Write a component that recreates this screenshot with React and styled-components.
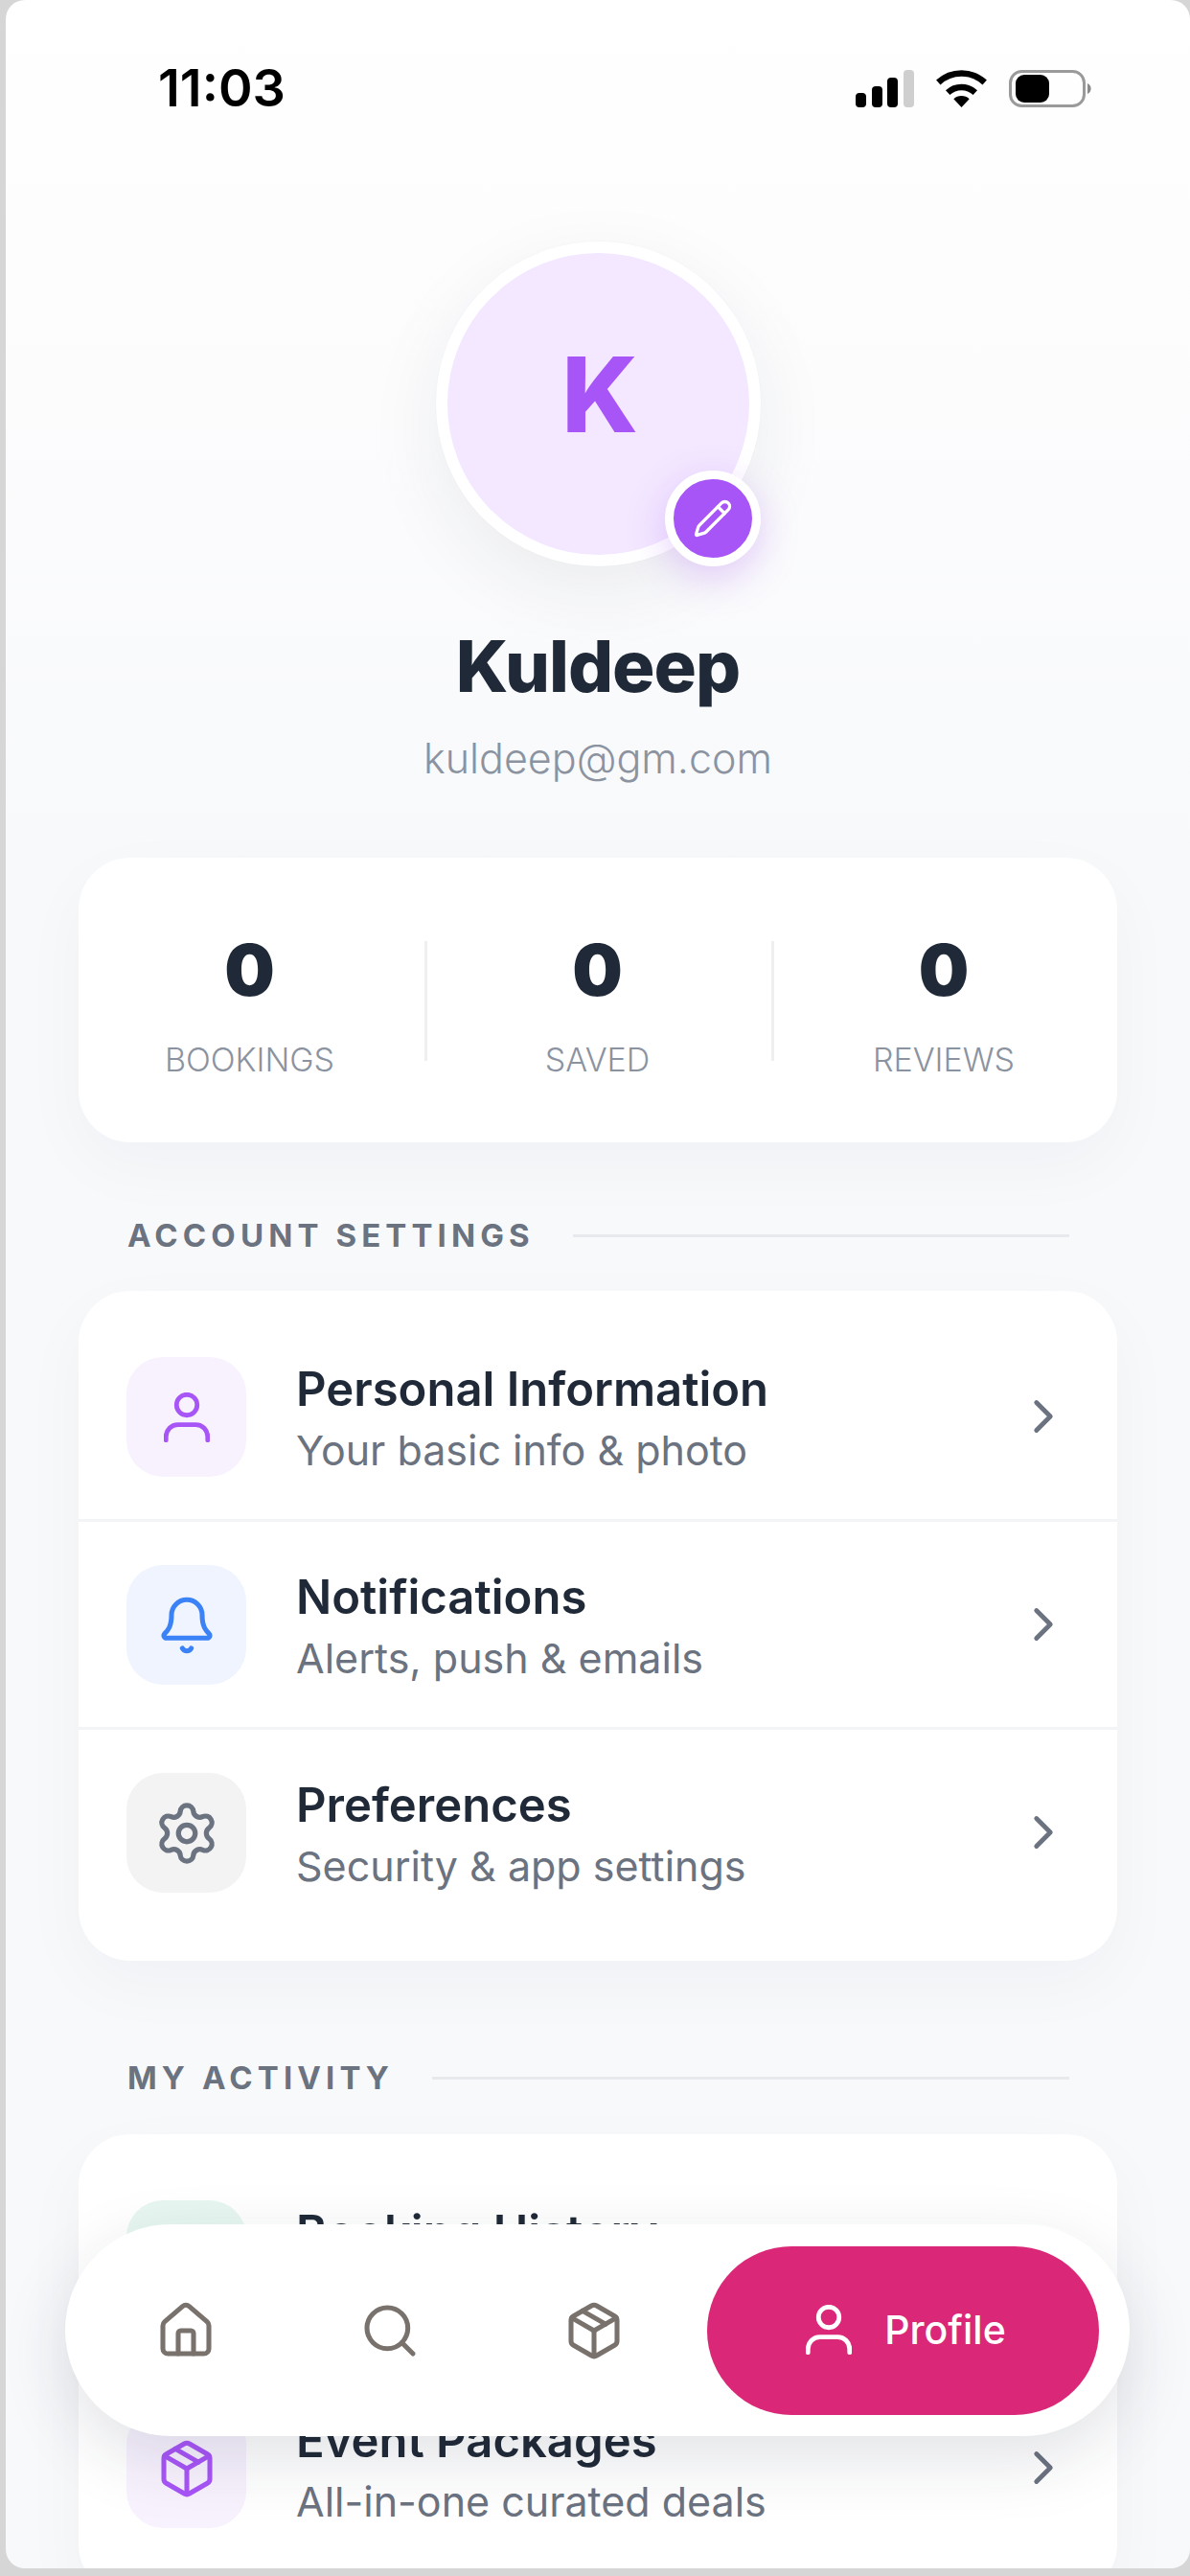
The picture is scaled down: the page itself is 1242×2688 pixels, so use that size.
import React from "react";
import styled, { createGlobalStyle } from "styled-components";
import { Bell, ChevronRight, House, Package, Pencil, Search, Settings, Calendar } from "lucide-react";

const Global = createGlobalStyle`
  html, body { margin: 0; padding: 0; background: #d6d6d6; }
  body { font-family: Inter, "Liberation Sans", sans-serif; }
  * { box-sizing: border-box; }
`;

const Page = styled.div`
  width: 1242px;
  height: 2688px;
  overflow: hidden;
  padding: 0 0 8px 6px;
`;

const Screen = styled.main`
  position: relative;
  width: 1236px;
  height: 2680px;
  overflow: hidden;
  border-radius: 20px;
  background: linear-gradient(180deg, #ffffff 0, #fdfdfe 250px, #f8f9fb 900px, #f8f9fb 100%);
`;

const StatusBar = styled.header`
  height: 52px;
  margin-top: 66px;
  padding: 0 102px 0 159px;
  display: flex;
  align-items: center;
  justify-content: space-between;
`;

const Time = styled.span`
  font-size: 54px;
  line-height: 52px;
  font-weight: 600;
  color: #000;
`;

const StatusIcons = styled.div`
  display: flex;
  align-items: center;
  gap: 23px;
`;

const Profile = styled.section`
  margin-top: 134px;
  display: flex;
  flex-direction: column;
  align-items: center;
`;

const Avatar = styled.div`
  position: relative;
  width: 339px;
  height: 339px;
  border-radius: 50%;
  border: 12px solid #fff;
  background: #f3e8ff;
  box-shadow: 0 24px 80px rgba(30, 41, 59, 0.07), 0 0 0 1px rgba(0, 0, 0, 0.012);
  display: flex;
  align-items: center;
  justify-content: center;
  font-size: 108px;
  font-weight: 800;
  color: #a855f7;
  line-height: 1;
  padding: 0 0 20px 4px;
`;

const EditBadge = styled.div`
  position: absolute;
  right: -12px;
  bottom: -12px;
  width: 100px;
  height: 100px;
  border-radius: 50%;
  border: 9px solid #fff;
  background: #a855f7;
  box-shadow: 0 12px 40px rgba(168, 85, 247, 0.28);
  color: #fff;
  display: flex;
  align-items: center;
  justify-content: center;
`;

const Name = styled.h1`
  margin: 64px 0 0;
  font-size: 74px;
  line-height: 80px;
  font-weight: 800;
  letter-spacing: -1px;
  color: #1f2937;
`;

const Email = styled.p`
  margin: 28px 0 0;
  font-size: 43px;
  line-height: 56px;
  font-weight: 300;
  color: #8b93a1;
`;

const Card = styled.div`
  margin: 0 76px;
  background: #fff;
  border-radius: 54px;
  box-shadow: 0 24px 70px rgba(30, 41, 59, 0.035);
`;

const StatsCard = styled(Card)`
  margin-top: 76px;
  height: 297px;
  padding-top: 72px;
  display: grid;
  grid-template-columns: 361px 3px 359px 3px 1fr;
  align-items: start;
`;

const Stat = styled.div`
  padding-right: 4px;
  display: flex;
  flex-direction: column;
  align-items: center;
`;

const StatValue = styled.strong`
  font-size: 74px;
  line-height: 90px;
  font-weight: 900;
  color: #1f2937;
`;

const StatLabel = styled.span`
  margin-top: 27px;
  font-size: 34px;
  line-height: 44px;
  font-weight: 300;
  color: #8b93a1;
`;

const StatDivider = styled.div`
  margin-top: 15px;
  height: 125px;
  background: #eeeff1;
`;

const SectionHead = styled.div`
  margin: ${(p) => p.$top}px 0 ${(p) => p.$bottom}px;
  padding: 0 126px 0 127px;
  display: flex;
  align-items: center;
  gap: 40px;
  font-size: 33px;
  line-height: 44px;
  font-weight: 700;
  letter-spacing: 5.1px;
  color: #6b7280;
  white-space: nowrap;
  &::after {
    content: "";
    flex: 1;
    height: 3px;
    background: #e8e9ec;
  }
`;

const ListCard = styled(Card)`
  padding: 24px 0;
`;

const Row = styled.div`
  height: 217px;
  padding: 45px 0 44px 50px;
  display: flex;
  align-items: flex-start;
  border-bottom: 3px solid ${(p) => (p.$last ? "transparent" : "#f3f4f6")};
`;

const IconBox = styled.div`
  width: 125px;
  height: 125px;
  flex: none;
  border-radius: 38px;
  background: ${(p) => p.$bg};
  color: ${(p) => p.$fg};
  display: flex;
  align-items: center;
  justify-content: center;
`;

const RowText = styled.div`
  margin: 3px 0 0 52px;
  flex: 1;
  display: flex;
  flex-direction: column;
`;

const RowTitle = styled.div`
  font-size: 49px;
  line-height: 62px;
  font-weight: 600;
  color: #1f2937;
`;

const RowSub = styled.div`
  margin-top: 1px;
  font-size: 43px;
  line-height: 62px;
  font-weight: 400;
  color: #6b7280;
`;

const Chevron = styled.div`
  width: 58px;
  margin: 33px 48px 0 0;
  color: #6b7280;
  display: flex;
`;

const Nav = styled.nav`
  position: absolute;
  left: 62px;
  bottom: 138px;
  width: 1111px;
  height: 221px;
  padding: 22px 31px 22px 19px;
  border-radius: 111px;
  background: #fff;
  box-shadow: 0 24px 70px rgba(30, 41, 59, 0.13);
  display: flex;
  align-items: center;
`;

const NavItem = styled.div`
  width: 213px;
  display: flex;
  justify-content: center;
  color: #78716c;
`;

const ActivePill = styled.div`
  margin-left: 12px;
  width: 409px;
  height: 176px;
  padding: 0 0 2px 6px;
  border-radius: 88px;
  background: #db2777;
  color: #fff;
  display: flex;
  align-items: center;
  justify-content: center;
  gap: 34px;
  font-size: 41px;
  font-weight: 500;
`;

const UserGlyph = ({ color = "currentColor" }) => (
  <svg width="48" height="52" viewBox="0 0 48 52" fill="none" stroke={color} strokeWidth="4.8" strokeLinecap="round">
    <circle cx="24" cy="13" r="10.75" />
    <path d="M2.25 49.75V46a12.4 12.4 0 0 1 12.4-12.4h18.7a12.4 12.4 0 0 1 12.4 12.4v3.75" />
  </svg>
);

const SignalIcon = () => (
  <svg width="61" height="39" viewBox="0 0 61 39">
    <rect x="0" y="24" width="11" height="15" rx="4" fill="#000" />
    <rect x="17" y="17" width="11" height="22" rx="4" fill="#000" />
    <rect x="33" y="8" width="11" height="31" rx="4" fill="#000" />
    <rect x="50" y="0" width="11" height="39" rx="4" fill="#cfcfcf" />
  </svg>
);

const WifiIcon = () => (
  <svg width="53" height="39" viewBox="0 0 53 39" fill="none">
    <path d="M2.3 13A35.5 35.5 0 0 1 50.7 13" stroke="#000" strokeWidth="6.5" />
    <path d="M12.2 23.6A21 21 0 0 1 40.8 23.6" stroke="#000" strokeWidth="6.5" />
    <path d="M26.5 39L18.3 30.2A12 12 0 0 1 34.7 30.2Z" fill="#000" />
  </svg>
);

const BatteryIcon = () => (
  <svg width="87" height="39" viewBox="0 0 87 39" fill="none">
    <rect x="1.5" y="1.5" width="77" height="36" rx="12" stroke="#9a9a9a" strokeWidth="3" />
    <rect x="7" y="5" width="35" height="29" rx="9" fill="#000" />
    <path d="M82 14a6 6 0 0 1 0 11Z" fill="#8a8a8a" />
  </svg>
);

const settings = [
  { title: "Personal Information", sub: "Your basic info & photo", bg: "#f8f2fe", fg: "#a855f7", icon: <UserGlyph /> },
  { title: "Notifications", sub: "Alerts, push & emails", bg: "#eff4fe", fg: "#3b82f6", icon: <Bell size={64} strokeWidth={1.9} /> },
  { title: "Preferences", sub: "Security & app settings", bg: "#f3f3f3", fg: "#6b7280", icon: <Settings size={70} strokeWidth={1.8} /> },
];

const activity = [
  { title: "Booking History", sub: "Past & upcoming events", bg: "#e7f6f0", fg: "#10b981", icon: <Calendar size={64} strokeWidth={1.9} /> },
  { title: "Event Packages", sub: "All-in-one curated deals", bg: "#f8f2fe", fg: "#a855f7", icon: <Package size={64} strokeWidth={1.9} /> },
];

const ListRow = ({ item, last }) => (
  <Row $last={last}>
    <IconBox $bg={item.bg} $fg={item.fg}>{item.icon}</IconBox>
    <RowText>
      <RowTitle>{item.title}</RowTitle>
      <RowSub>{item.sub}</RowSub>
    </RowText>
    <Chevron><ChevronRight size={58} strokeWidth={2} /></Chevron>
  </Row>
);

export default function App() {
  return (
    <Page>
      <Global />
      <Screen>
        <StatusBar>
          <Time>11:03</Time>
          <StatusIcons>
            <SignalIcon />
            <WifiIcon />
            <BatteryIcon />
          </StatusIcons>
        </StatusBar>

        <Profile>
          <Avatar>
            K
            <EditBadge><Pencil size={42} strokeWidth={1.9} /></EditBadge>
          </Avatar>
          <Name>Kuldeep</Name>
          <Email>kuldeep@gm.com</Email>
        </Profile>

        <StatsCard>
          <Stat><StatValue>0</StatValue><StatLabel>BOOKINGS</StatLabel></Stat>
          <StatDivider />
          <Stat><StatValue>0</StatValue><StatLabel>SAVED</StatLabel></Stat>
          <StatDivider />
          <Stat><StatValue>0</StatValue><StatLabel>REVIEWS</StatLabel></Stat>
        </StatsCard>

        <SectionHead $top={75} $bottom={36}>ACCOUNT SETTINGS</SectionHead>
        <ListCard>
          {settings.map((item, i) => (
            <ListRow key={item.title} item={item} last={i === settings.length - 1} />
          ))}
        </ListCard>

        <SectionHead $top={100} $bottom={37}>MY ACTIVITY</SectionHead>
        <ListCard>
          {activity.map((item) => (
            <ListRow key={item.title} item={item} />
          ))}
        </ListCard>

        <Nav>
          <NavItem><House size={64} strokeWidth={1.9} /></NavItem>
          <NavItem><Search size={64} strokeWidth={1.9} /></NavItem>
          <NavItem><Package size={64} strokeWidth={1.9} /></NavItem>
          <ActivePill>
            <UserGlyph />
            Profile
          </ActivePill>
        </Nav>
      </Screen>
    </Page>
  );
}
